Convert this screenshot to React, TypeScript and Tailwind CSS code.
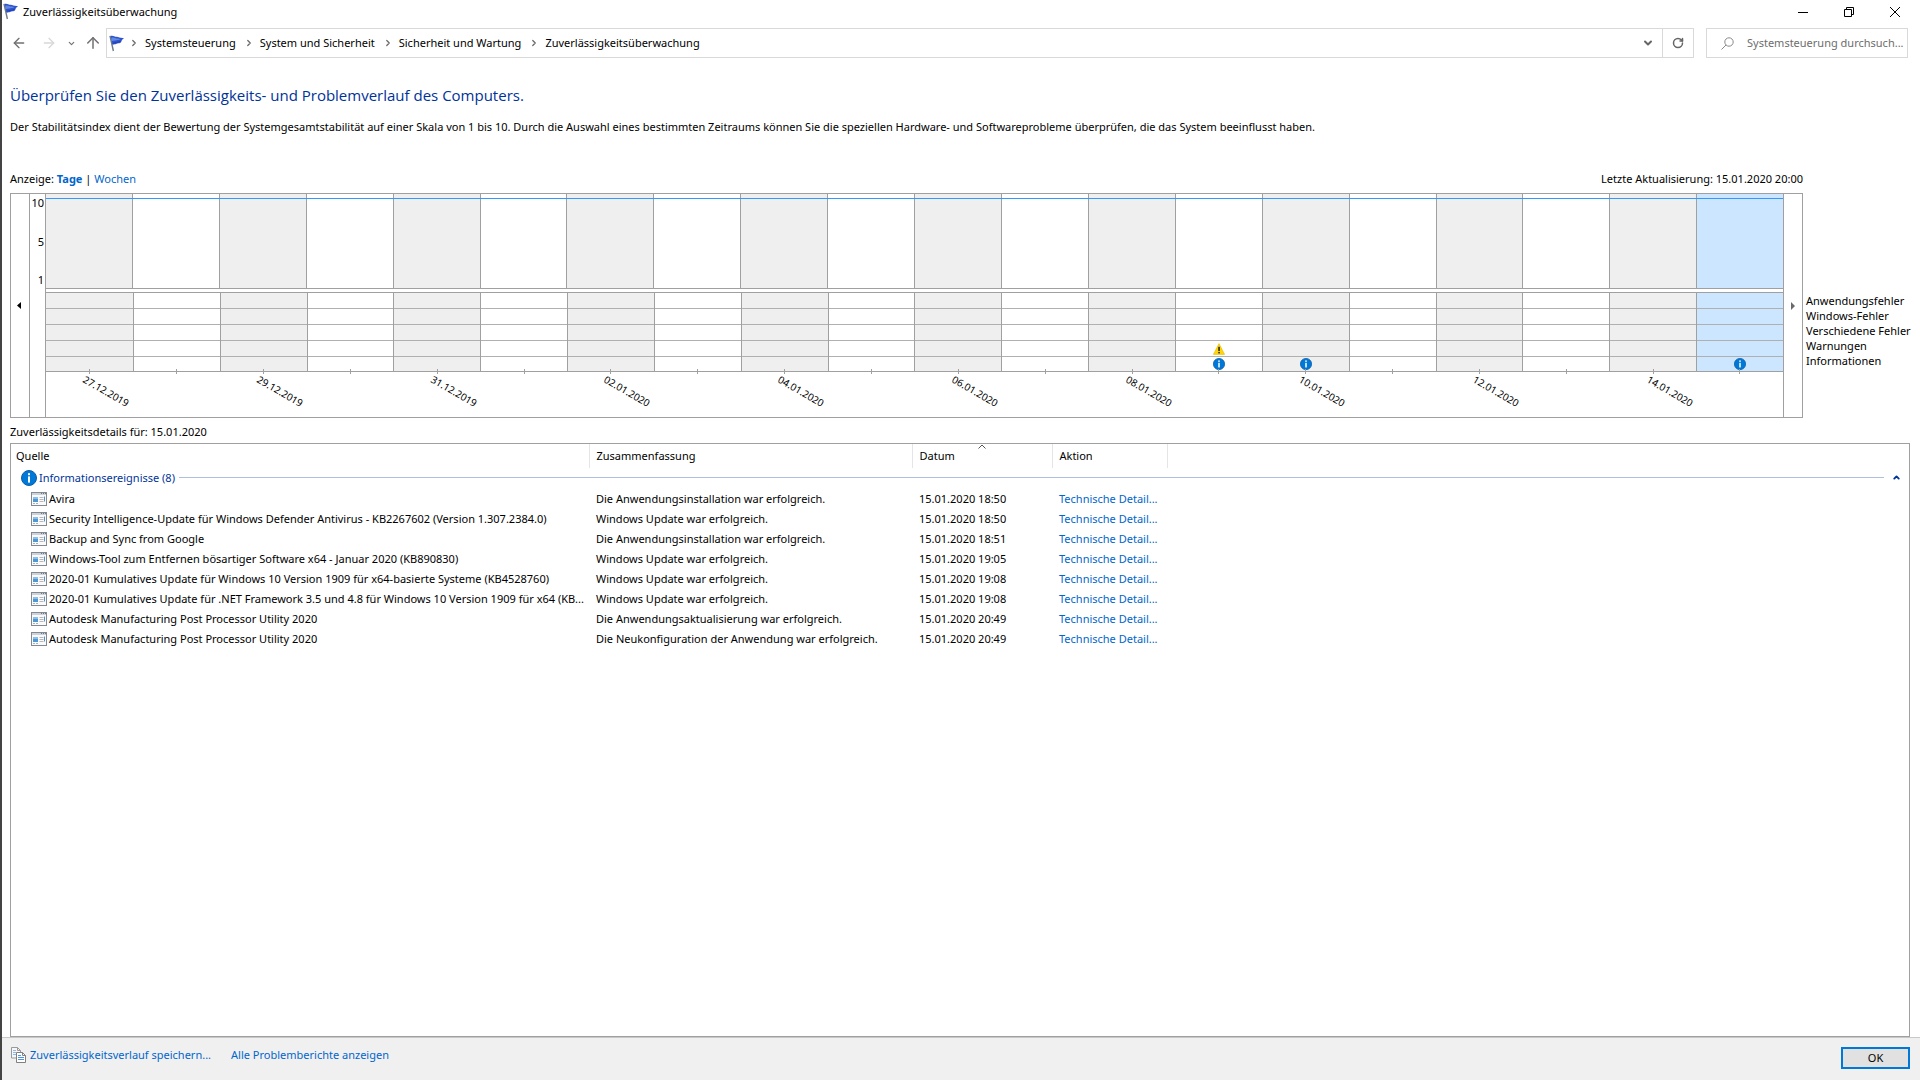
import { ArrowLeft, ArrowRight, ArrowUp, ChevronDown, ChevronRight, ChevronUp, RotateCw } from "lucide-react"

type Day = {
  date: string
  label?: boolean
  warning?: boolean
  info?: boolean
  selected?: boolean
}

const days: Day[] = [
  { date: "27.12.2019", label: true },
  { date: "28.12.2019" },
  { date: "29.12.2019", label: true },
  { date: "30.12.2019" },
  { date: "31.12.2019", label: true },
  { date: "01.01.2020" },
  { date: "02.01.2020", label: true },
  { date: "03.01.2020" },
  { date: "04.01.2020", label: true },
  { date: "05.01.2020" },
  { date: "06.01.2020", label: true },
  { date: "07.01.2020" },
  { date: "08.01.2020", label: true },
  { date: "09.01.2020", warning: true, info: true },
  { date: "10.01.2020", label: true, info: true },
  { date: "11.01.2020" },
  { date: "12.01.2020", label: true },
  { date: "13.01.2020" },
  { date: "14.01.2020", label: true },
  { date: "15.01.2020", info: true, selected: true },
]

const crumbs = ["Systemsteuerung", "System und Sicherheit", "Sicherheit und Wartung", "Zuverlässigkeitsüberwachung"]

const categories = ["Anwendungsfehler", "Windows-Fehler", "Verschiedene Fehler", "Warnungen", "Informationen"]

const events = [
  { source: "Avira", summary: "Die Anwendungsinstallation war erfolgreich.", date: "15.01.2020 18:50" },
  {
    source: "Security Intelligence-Update für Windows Defender Antivirus - KB2267602 (Version 1.307.2384.0)",
    summary: "Windows Update war erfolgreich.",
    date: "15.01.2020 18:50",
  },
  { source: "Backup and Sync from Google", summary: "Die Anwendungsinstallation war erfolgreich.", date: "15.01.2020 18:51" },
  {
    source: "Windows-Tool zum Entfernen bösartiger Software x64 - Januar 2020 (KB890830)",
    summary: "Windows Update war erfolgreich.",
    date: "15.01.2020 19:05",
  },
  {
    source: "2020-01 Kumulatives Update für Windows 10 Version 1909 für x64-basierte Systeme (KB4528760)",
    summary: "Windows Update war erfolgreich.",
    date: "15.01.2020 19:08",
  },
  {
    source: "2020-01 Kumulatives Update für .NET Framework 3.5 und 4.8 für Windows 10 Version 1909 für x64 (KB...",
    summary: "Windows Update war erfolgreich.",
    date: "15.01.2020 19:08",
  },
  {
    source: "Autodesk Manufacturing Post Processor Utility 2020",
    summary: "Die Anwendungsaktualisierung war erfolgreich.",
    date: "15.01.2020 20:49",
  },
  {
    source: "Autodesk Manufacturing Post Processor Utility 2020",
    summary: "Die Neukonfiguration der Anwendung war erfolgreich.",
    date: "15.01.2020 20:49",
  },
]

function dayColor(day: Day, index: number) {
  if (day.selected) return "bg-[#cce6ff]"
  return index % 2 === 0 ? "bg-[#efefef]" : "bg-white"
}

function FlagIcon() {
  return (
    <svg width="16" height="17" viewBox="0 0 16 17" className="shrink-0" aria-hidden="true">
      <path d="M1 .8 L4.4 16" stroke="#6b7886" strokeWidth="1.4" />
      <path d="M1.6 1 C4 0 5.2 1.6 7.6 1.8 C10 2 11 3.4 15.2 3 C13.6 4.2 12.6 5 12.4 6.6 C11.4 9 9.6 7.8 7.6 8.8 C6 9.6 5 9.2 3.6 10 Z" fill="#2f54cc" />
      <path d="M2.4 2.8 C5 1.8 6.4 3.8 9 3.6 L11.4 4.2 C9.6 5.2 8 4.8 6.4 5.4 L3 6 Z" fill="#6288e6" />
      <path d="M3.4 8.4 C6 7.2 8 8 11.6 6.2" stroke="#2440ac" strokeWidth=".9" fill="none" />
    </svg>
  )
}

function InfoIcon({ className }: { className: string }) {
  return (
    <svg viewBox="0 0 16 16" className={className} aria-hidden="true">
      <circle cx="8" cy="8" r="7.5" fill="#0078d7" stroke="#0a5ca8" />
      <rect x="7" y="3.2" width="2" height="2" fill="#fff" />
      <rect x="7" y="6.4" width="2" height="6.2" fill="#fff" />
    </svg>
  )
}

function WarningIcon() {
  return (
    <svg width="12" height="12" viewBox="0 0 12 12" aria-hidden="true">
      <path d="M6 .6 L11.6 11.4 H.4 Z" fill="#ffd60a" stroke="#e8b800" strokeWidth=".6" />
      <rect x="5.3" y="3.8" width="1.5" height="4.2" fill="#1a1a1a" />
      <rect x="5.3" y="8.9" width="1.5" height="1.5" fill="#1a1a1a" />
    </svg>
  )
}

function ProgramIcon() {
  return (
    <svg width="16" height="14" viewBox="0 0 16 14" className="shrink-0" aria-hidden="true">
      <rect x=".5" y=".5" width="15" height="13" fill="#fafafa" stroke="#84898f" />
      <rect x="1" y="1" width="14" height="2" fill="#ccd2d9" />
      <path d="M10 1.5h1M12 1.5h1M14 1.5h1" stroke="#6f7780" />
      <rect x="2" y="5" width="5" height="2" fill="#8cbde6" />
      <rect x="2" y="7" width="5" height="3" fill="#4f97d3" />
      <path d="M8.5 5.5h4M8.5 7.5h4M8.5 9.5h4" stroke="#b4b9bf" />
      <path d="M13.5 4.5v5" stroke="#5c8fc0" />
      <path d="M2 11.5h2M5 11.5h2" stroke="#9fb2c6" />
    </svg>
  )
}

function CopyIcon() {
  return (
    <svg width="15" height="16" viewBox="0 0 15 16" className="shrink-0" aria-hidden="true">
      <path d="M.5 .5h6l3 3v7.5h-9z" fill="#f6f6f6" stroke="#9a9a9a" />
      <path d="M6.5 .5v3h3" fill="none" stroke="#9a9a9a" />
      <path d="M2 3.5h3M2 5.5h3M2 7.5h3" stroke="#8db8ee" />
      <path d="M5.5 5.5h6l3 3v7h-9z" fill="#fff" stroke="#808080" />
      <path d="M11.5 5.5v3h3" fill="none" stroke="#808080" />
      <path d="M7 8.5h3M7 10.5h6M7 12.5h6" stroke="#4f93e6" />
    </svg>
  )
}

function TitleBar() {
  return (
    <header className="flex h-[23px] items-center justify-between pr-0.5 pl-px">
      <div className="flex items-center gap-1">
        <FlagIcon />
        <h1>Zuverlässigkeitsüberwachung</h1>
      </div>
      <div className="flex h-5 items-center">
        <button aria-label="Minimieren" className="flex w-[46px] justify-center">
          <svg width="10" height="10" viewBox="0 0 10 10">
            <path d="M0 5.5h10" stroke="#000" />
          </svg>
        </button>
        <button aria-label="Verkleinern" className="flex w-[46px] justify-center">
          <svg width="10" height="10" viewBox="0 0 10 10" fill="none" stroke="#000">
            <path d="M.5 2.5h7v7h-7zM2.5 2.5v-2h7v7h-2" />
          </svg>
        </button>
        <button aria-label="Schließen" className="flex w-[46px] justify-center">
          <svg width="10" height="10" viewBox="0 0 10 10" stroke="#000">
            <path d="M0 0l10 10M10 0L0 10" />
          </svg>
        </button>
      </div>
    </header>
  )
}

function AddressBar() {
  return (
    <div className="mt-[5px] flex h-[30px] items-center pr-3">
      <nav aria-label="Navigation" className="flex w-[104px] items-center pl-[9px] text-[#707070]">
        <button aria-label="Zurück">
          <ArrowLeft size={16} />
        </button>
        <button aria-label="Vorwärts" className="ml-[14px] text-[#d8d8d8]">
          <ArrowRight size={16} />
        </button>
        <button aria-label="Zuletzt besucht" className="ml-2.5">
          <ChevronDown size={9} strokeWidth={3} />
        </button>
        <button aria-label="Nach oben" className="ml-2">
          <ArrowUp size={18} strokeWidth={2} />
        </button>
      </nav>
      <div className="flex h-full flex-1 items-center border border-[#d9d9d9] pl-0.5">
        <FlagIcon />
        {crumbs.map((crumb) => (
          <span key={crumb} className="flex items-center">
            <ChevronRight size={10} strokeWidth={3} className="mr-1.5 ml-1 text-[#6a6a6a]" />
            <a href="#" className="mr-1">
              {crumb}
            </a>
          </span>
        ))}
        <button aria-label="Vorherige Orte" className="mr-2 ml-auto text-[#666]">
          <ChevronDown size={12} strokeWidth={4} />
        </button>
        <button
          aria-label="Aktualisieren"
          className="flex h-full w-[31px] items-center justify-center border-l border-[#d9d9d9] text-[#666]"
        >
          <RotateCw size={12} strokeWidth={3} />
        </button>
      </div>
      <label className="ml-3 flex h-full w-[202px] items-center border border-[#d9d9d9] pl-[14px]">
        <svg width="13" height="13" viewBox="0 0 13 13" fill="none" stroke="#8a8a8a" className="shrink-0">
          <circle cx="8" cy="5" r="4.2" />
          <path d="M5 8L.5 12.5" />
        </svg>
        <input
          type="text"
          aria-label="Systemsteuerung durchsuchen"
          placeholder="Systemsteuerung durchsuch..."
          className="ml-[13px] w-full min-w-0 bg-transparent outline-none placeholder:text-[#6d6d6d]"
        />
      </label>
    </div>
  )
}

function Chart() {
  return (
    <div className="flex flex-1 border border-[#a0a0a0]">
      <button aria-label="Vorherige Tage" className="flex w-[18px] items-center justify-center pr-0.5">
        <svg width="4" height="7" viewBox="0 0 4 7">
          <path d="M4 0v7L0 3.5z" fill="#000" />
        </svg>
      </button>
      <div className="w-4 border-l border-[#a0a0a0] pr-px">
        <div className="flex h-[94px] flex-col justify-between pt-px text-right">
          <span>10</span>
          <span>5</span>
          <span>1</span>
        </div>
      </div>
      <div className="flex-1 border-x border-[#a0a0a0]">
        <div className="relative flex h-[95px] border-b border-[#a0a0a0]">
          {days.map((day, i) => (
            <div key={day.date} className={`flex-1 border-l border-[#a0a0a0] first:border-l-0 ${dayColor(day, i)}`} />
          ))}
          {/* stability index */}
          <div className="absolute inset-x-0 top-1 h-px bg-[#3399ff]" />
        </div>
        <div className="mt-[3px] flex border-t border-[#a0a0a0]">
          {days.map((day, i) => (
            <div key={day.date} className="relative flex-1">
              <div className={i > 0 ? "border-l border-[#a0a0a0]" : ""}>
                {categories.map((category) => (
                  <div
                    key={category}
                    className={`flex h-4 items-center justify-center border-b border-[#b0b0b0] last:h-[15px] last:border-[#a0a0a0] ${dayColor(day, i)}`}
                  >
                    {category === "Warnungen" && day.warning && <WarningIcon />}
                    {category === "Informationen" && day.info && <InfoIcon className="size-3" />}
                  </div>
                ))}
              </div>
              <div className="absolute top-[76px] left-1/2 h-[5px] w-px bg-[#a0a0a0]" />
              <div className="h-[45px]">
                {day.label && (
                  <span className="absolute top-20 left-1/2 -ml-0.5 origin-top-left rotate-30 text-[10px] leading-3">
                    {day.date}
                  </span>
                )}
              </div>
            </div>
          ))}
        </div>
      </div>
      <button aria-label="Nächste Tage" className="flex w-[18px] items-center justify-center">
        <svg width="4" height="8" viewBox="0 0 4 8">
          <path d="M0 0v8L4 4z" fill="#6a6a6a" />
        </svg>
      </button>
    </div>
  )
}

function EventTable() {
  return (
    <div className="mr-2.5 flex-1 border border-[#a0a0a0]">
      <table className="w-full table-fixed border-collapse text-left">
        <colgroup>
          <col className="w-[578px]" />
          <col className="w-[323px]" />
          <col className="w-[140px]" />
          <col className="w-[115px]" />
          <col />
        </colgroup>
        <thead>
          <tr className="h-6">
            <th className="border-r border-[#e5e5e5] pl-[5px] font-normal">Quelle</th>
            <th className="border-r border-[#e5e5e5] pl-[7px] font-normal">Zusammenfassung</th>
            <th aria-sort="ascending" className="relative border-r border-[#e5e5e5] pl-[7px] font-normal">
              Datum
              <svg width="8" height="5" viewBox="0 0 8 5" className="absolute top-0 left-1/2 -translate-x-1/2">
                <path d="M.5 4.5L4 1l3.5 3.5" fill="none" stroke="#555" />
              </svg>
            </th>
            <th className="border-r border-[#e5e5e5] pl-[7px] font-normal">Aktion</th>
            <td />
          </tr>
        </thead>
        <tbody>
          <tr className="h-[21px]">
            <td colSpan={5} className="pb-0.5">
              <div className="flex items-center pr-2 pl-2.5 text-[#003399]">
                <InfoIcon className="size-4" />
                <span className="ml-0.5">Informationsereignisse (8)</span>
                <div className="ml-1 h-px flex-1 bg-[#b0bfdf]" />
                <button aria-label="Gruppe reduzieren" className="ml-2">
                  <ChevronUp size={9} strokeWidth={5} />
                </button>
              </div>
            </td>
          </tr>
          {events.map((event, i) => (
            <tr key={i} className="h-5">
              <td className="pl-5">
                <div className="flex items-center gap-0.5">
                  <ProgramIcon />
                  <span className="whitespace-nowrap">{event.source}</span>
                </div>
              </td>
              <td className="pl-[7px] whitespace-nowrap">{event.summary}</td>
              <td className="pl-[7px] whitespace-nowrap">{event.date}</td>
              <td className="pl-[7px] whitespace-nowrap">
                <a href="#" className="text-[#0066cc]">
                  Technische Detail...
                </a>
              </td>
              <td />
            </tr>
          ))}
        </tbody>
      </table>
    </div>
  )
}

export default function App() {
  return (
    <div className="flex min-h-screen flex-col border-l-2 border-[#444] bg-white font-['Noto_Sans',sans-serif] text-[11px] leading-4 text-black">
      <TitleBar />
      <AddressBar />
      <main className="flex flex-1 flex-col pl-2">
        <h2 className="mt-[26px] font-['Open_Sans',sans-serif] text-[15px] leading-[22px] text-[#003399]">
          Überprüfen Sie den Zuverlässigkeits- und Problemverlauf des Computers.
        </h2>
        <p className="mt-[13px]">
          Der Stabilitätsindex dient der Bewertung der Systemgesamtstabilität auf einer Skala von 1 bis 10. Durch die
          Auswahl eines bestimmten Zeitraums können Sie die speziellen Hardware- und Softwareprobleme überprüfen, die
          das System beeinflusst haben.
        </p>
        <div className="mt-9 mb-1.5 flex justify-between pr-[117px]">
          <div>
            Anzeige:{" "}
            <a href="#" className="font-bold text-[#0066cc]">
              Tage
            </a>{" "}
            |{" "}
            <a href="#" className="text-[#0066cc]">
              Wochen
            </a>
          </div>
          <div>Letzte Aktualisierung: 15.01.2020 20:00</div>
        </div>
        <div className="flex">
          <Chart />
          <ul className="w-[117px] pt-[100px] pl-[3px] leading-[15px]">
            {categories.map((category) => (
              <li key={category} className="whitespace-nowrap">
                {category}
              </li>
            ))}
          </ul>
        </div>
        <div className="mt-1.5 mb-[3px]">Zuverlässigkeitsdetails für: 15.01.2020</div>
        <EventTable />
      </main>
      <footer className="flex h-[43px] items-start justify-between border-t border-[#c8c8c8] bg-[#f0f0f0] pt-[9px] pr-2.5 pl-[9px]">
        <div className="flex items-center gap-5 text-[#0066cc]">
          <a href="#" className="flex items-center gap-1">
            <CopyIcon />
            Zuverlässigkeitsverlauf speichern...
          </a>
          <a href="#">Alle Problemberichte anzeigen</a>
        </div>
        <button className="h-[22px] w-[69px] border-2 border-[#0078d7] bg-[#e1e1e1]">OK</button>
      </footer>
    </div>
  )
}
